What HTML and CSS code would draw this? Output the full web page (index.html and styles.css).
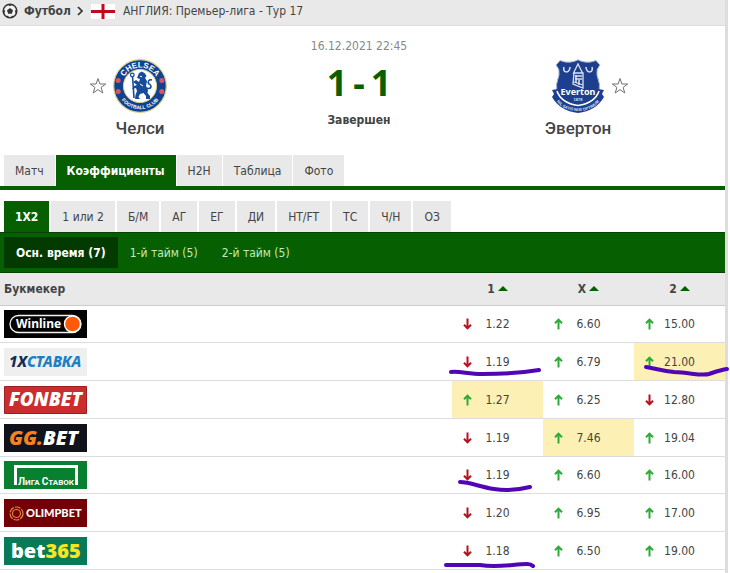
FILE: index.html
```html
<!DOCTYPE html>
<html lang="ru">
<head>
    <meta charset="UTF-8">
    <meta name="viewport" content="width=device-width, initial-scale=1.0">
    <title>Челси - Эвертон</title>
    <link rel="stylesheet" href="styles.css">
</head>
<body>
    <!-- Arrow shapes shared by the odds cells -->
    <svg class="defs" width="0" height="0" aria-hidden="true">
        <symbol id="up" viewBox="0 0 9 12">
            <path d="M4.5 11.5V2M1 5.3L4.5 1.6L8 5.3" fill="none" stroke="#2cac37" stroke-width="2"/>
        </symbol>
        <symbol id="down" viewBox="0 0 9 12">
            <path d="M4.5 .5V10M1 6.7L4.5 10.4L8 6.7" fill="none" stroke="#b5121e" stroke-width="2"/>
        </symbol>
        <symbol id="star" viewBox="0 0 18 18">
            <path d="M9 1.5L10.9 7H16.7L12.1 10.4L13.8 16L9 12.6L4.2 16L5.9 10.4L1.3 7H7.1Z" fill="#fff" stroke="#707070" stroke-width="1"/>
        </symbol>
    </svg>

    <div class="page">
        <nav class="breadcrumb">
            <svg width="16" height="16" viewBox="0 0 16 16" aria-hidden="true">
                <circle cx="8" cy="8" r="6.8" fill="#f4f4f4" stroke="#333" stroke-width="1.5"/>
                <path d="M8 5L11 7.2L9.9 10.7H6.1L5 7.2Z" fill="#333"/>
                <path d="M5.5 1.5L8 3.2L10.5 1.5ZM1.2 6.5L3.2 7.8L2 11ZM14.8 6.5L12.8 7.8L14 11ZM4 13.5L6 12.6L7 14.8ZM12 13.5L10 12.6L9 14.8Z" fill="#333"/>
            </svg>
            <a class="sport" href="#">Футбол</a>
            <svg class="chevron" width="6" height="10" viewBox="0 0 6 10" aria-hidden="true">
                <path d="M1 1L5 5L1 9" fill="none" stroke="#333" stroke-width="1.7"/>
            </svg>
            <svg class="flag" width="24" height="15" viewBox="0 0 24 15" aria-hidden="true">
                <path d="M0 0H24V15H0Z" fill="#fff"/>
                <path d="M12 0V15M0 7.5H24" stroke="#c00a1e" stroke-width="3"/>
            </svg>
            <a class="league" href="#">АНГЛИЯ: Премьер-лига - Тур 17</a>
        </nav>

        <header class="match">
            <div class="team">
                <div class="emblem">
                    <button class="fav fav-left" aria-label="Челси"><svg width="18" height="18"><use href="#star"/></svg></button>
                    <svg class="crest" width="54" height="54" viewBox="0 0 54 54" aria-hidden="true">
                        <defs>
                            <path id="arcTop" d="M8.6 27A18.4 18.4 0 0 1 45.4 27"/>
                            <path id="arcBottom" d="M3.8 27A23.2 23.2 0 0 0 50.2 27"/>
                        </defs>
                        <circle cx="27" cy="27" r="26.3" fill="#0f4390" stroke="#d9cd8a" stroke-width="1.2"/>
                        <circle cx="27" cy="27" r="16.6" fill="#fff" stroke="#d9cd8a" stroke-width="1"/>
                        <text class="ring ring-top"><textPath href="#arcTop" startOffset="50%">CHELSEA</textPath></text>
                        <text class="ring ring-bottom"><textPath href="#arcBottom" startOffset="50%">FOOTBALL CLUB</textPath></text>
                        <g fill="#dd5362">
                            <circle cx="5.2" cy="21.5" r="2.5"/><circle cx="5.2" cy="32.5" r="2.5"/>
                            <circle cx="48.8" cy="21.5" r="2.5"/><circle cx="48.8" cy="32.5" r="2.5"/>
                        </g>
                        <path d="M26 14L29 12.5L32 14.5L33.5 17L32 19L34 22L33 27L35 31L34.5 34L37 37V40H33V37L30.5 34L27 35L25.5 38L27 40H22L22.5 36L24 32L23 29L19 30L21 27L24 26L20 23L23 21L26 23L27 20L24 19Z" fill="#174c9b"/>
                        <path d="M19.5 17L21 39M33 29C39 31 39 26 36 25C34 23 36 20 39 21" fill="none" stroke="#174c9b" stroke-width="1.6"/>
                        <circle cx="19.3" cy="16" r="1.8" fill="#fff" stroke="#174c9b" stroke-width="1.3"/>
                        <path d="M27 17L29 18M27 25L30 27" stroke="#fff" stroke-width="1"/>
                    </svg>
                </div>
                <a class="team-name" href="#">Челси</a>
            </div>

            <div class="result">
                <time class="date" datetime="2021-12-16T22:45">16.12.2021 22:45</time>
                <div class="score"><span>1</span><span>-</span><span>1</span></div>
                <div class="status">Завершен</div>
            </div>

            <div class="team">
                <div class="emblem">
                    <svg class="crest" width="54" height="54" viewBox="0 0 54 54" aria-hidden="true">
                        <defs>
                            <path id="motto" d="M4 40C13 56 41 56 50 40"/>
                        </defs>
                        <path d="M9 1.5Q15 4 20 3Q24 2.5 27 .8Q30 2.5 34 3Q39 4 45 1.5L49 6Q45 10 46 16Q50 26 48 34Q44 44 27 50Q10 44 6 34Q4 26 8 16Q9 10 5 6Z" fill="#1d3f8e" stroke="#a9b9d9" stroke-width="1"/>
                        <path d="M1 31L7 30Q8 42 27 46Q46 42 47 30L53 31L51 35L53 38Q45 52 27 54Q9 52 1 38L3 35Z" fill="#1d3f8e"/>
                        <path d="M6 32Q10 44 27 46.5Q44 44 48 32" fill="none" stroke="#fff" stroke-width="1.6"/>
                        <path d="M13 8C11 14 19 15 19 8M35 8C35 15 43 14 41 8" fill="none" stroke="#dce4f2" stroke-width="1.5"/>
                        <path d="M27 5L31.5 14H22.5ZM23 14H32V29L22 25ZM24 17H31M24 20H31M23 23L32 26" fill="#1d3f8e" stroke="#dce4f2" stroke-width="1.3"/>
                        <path d="M25 16V24M28 21V26" stroke="#dce4f2" stroke-width="1.5"/>
                        <text class="everton" x="27" y="36">Everton</text>
                        <text class="founded" x="27" y="42">1878</text>
                        <text class="motto"><textPath href="#motto" startOffset="50%">NIL SATIS NISI OPTIMUM</textPath></text>
                    </svg>
                    <button class="fav fav-right" aria-label="Эвертон"><svg width="18" height="18"><use href="#star"/></svg></button>
                </div>
                <a class="team-name" href="#">Эвертон</a>
            </div>
        </header>

        <nav class="tabs">
            <a href="#">Матч</a>
            <a class="active" href="#">Коэффициенты</a>
            <a href="#">H2H</a>
            <a href="#">Таблица</a>
            <a href="#">Фото</a>
        </nav>

        <nav class="tabs markets">
            <a class="active" href="#">1X2</a>
            <a href="#">1 или 2</a>
            <a href="#">Б/М</a>
            <a href="#">АГ</a>
            <a href="#">ЕГ</a>
            <a href="#">ДИ</a>
            <a href="#">HT/FT</a>
            <a href="#">ТС</a>
            <a href="#">Ч/Н</a>
            <a href="#">ОЗ</a>
        </nav>

        <nav class="periods">
            <a class="active" href="#">Осн. время (7)</a>
            <a href="#">1-й тайм (5)</a>
            <a href="#">2-й тайм (5)</a>
        </nav>

        <table class="odds">
            <thead>
                <tr>
                    <th class="bookmaker">Букмекер</th>
                    <th><button class="sort">1<i></i></button></th>
                    <th><button class="sort">X<i></i></button></th>
                    <th><button class="sort">2<i></i></button></th>
                </tr>
            </thead>
            <tbody>
                <tr>
                    <td>
                        <a class="logo" href="#">
                            <svg width="83" height="28" viewBox="0 0 83 28">
                                <path d="M0 0H83V28H0Z" fill="#030303"/>
                                <rect x="6" y="5.5" width="71" height="17" rx="8.5" fill="#030303" stroke="#f2f2f2" stroke-width="1.3"/>
                                <circle cx="68.5" cy="14" r="8" fill="#ff5a0a" stroke="#fff" stroke-width="1.4"/>
                                <text class="winline" x="12" y="18">Winline</text>
                            </svg>
                        </a>
                    </td>
                    <td><div class="odd"><svg><use href="#down"/></svg><span>1.22</span></div></td>
                    <td><div class="odd"><svg><use href="#up"/></svg><span>6.60</span></div></td>
                    <td><div class="odd"><svg><use href="#up"/></svg><span>15.00</span></div></td>
                </tr>
                <tr>
                    <td>
                        <a class="logo" href="#">
                            <svg width="83" height="28" viewBox="0 0 83 28">
                                <path d="M0 0H83V28H0Z" fill="#efefef"/>
                                <text class="xstavka" x="5" y="19"><tspan fill="#152b50">1X</tspan><tspan fill="#1b7fc3">СТАВКА</tspan></text>
                            </svg>
                        </a>
                    </td>
                    <td>
                        <div class="odd"><svg><use href="#down"/></svg><span>1.19</span></div>
                        <svg class="mark"><path d="M-1 29C8 28 16 31 30 31C52 31 69 30 87 27"/></svg>
                    </td>
                    <td><div class="odd"><svg><use href="#up"/></svg><span>6.79</span></div></td>
                    <td class="best">
                        <div class="odd"><svg><use href="#up"/></svg><span>21.00</span></div>
                        <svg class="mark"><path d="M12 24C24 26 28 28 40 29C58 30 68 33 75 31C81 29 86 27 93 26"/></svg>
                    </td>
                </tr>
                <tr>
                    <td>
                        <a class="logo" href="#">
                            <svg width="83" height="28" viewBox="0 0 83 28">
                                <path d="M.5 .5H82.5V27.5H.5Z" fill="#c92d2e" stroke="#9c2022"/>
                                <text class="fonbet" x="5" y="20">FONBET</text>
                            </svg>
                        </a>
                    </td>
                    <td class="best"><div class="odd"><svg><use href="#up"/></svg><span>1.27</span></div></td>
                    <td><div class="odd"><svg><use href="#up"/></svg><span>6.25</span></div></td>
                    <td><div class="odd"><svg><use href="#down"/></svg><span>12.80</span></div></td>
                </tr>
                <tr>
                    <td>
                        <a class="logo" href="#">
                            <svg width="83" height="28" viewBox="0 0 83 28">
                                <path d="M0 0H83V28H0Z" fill="#10121c"/>
                                <text class="ggbet" x="5" y="21"><tspan fill="#f58220">GG.</tspan><tspan fill="#fff">BET</tspan></text>
                            </svg>
                        </a>
                    </td>
                    <td><div class="odd"><svg><use href="#down"/></svg><span>1.19</span></div></td>
                    <td class="best"><div class="odd"><svg><use href="#up"/></svg><span>7.46</span></div></td>
                    <td><div class="odd"><svg><use href="#up"/></svg><span>19.04</span></div></td>
                </tr>
                <tr>
                    <td>
                        <a class="logo" href="#">
                            <svg width="83" height="28" viewBox="0 0 83 28">
                                <path d="M0 0H83V28H0Z" fill="#08802f"/>
                                <path d="M11.5 24V5.5H72.5V24" fill="none" stroke="#fff" stroke-width="3"/>
                                <text class="liga" x="42" y="24"><tspan class="cap">Л</tspan>ИГА <tspan class="cap">С</tspan>ТАВОК</text>
                            </svg>
                        </a>
                    </td>
                    <td>
                        <div class="odd"><svg><use href="#down"/></svg><span>1.19</span></div>
                        <svg class="mark"><path d="M8 25C18 25 28 30 42 32C55 34 66 33 78 30"/></svg>
                    </td>
                    <td><div class="odd"><svg><use href="#up"/></svg><span>6.60</span></div></td>
                    <td><div class="odd"><svg><use href="#up"/></svg><span>16.00</span></div></td>
                </tr>
                <tr>
                    <td>
                        <a class="logo" href="#">
                            <svg width="83" height="28" viewBox="0 0 83 28">
                                <path d="M0 0H83V28H0Z" fill="#730006"/>
                                <circle cx="12.5" cy="14.5" r="6.5" fill="none" stroke="#d98a3c" stroke-width="1.2" stroke-dasharray="6 1"/>
                                <circle cx="12.5" cy="14.5" r="4" fill="none" stroke="#d98a3c" stroke-width="1.2"/>
                                <text class="olimpbet" x="22" y="18">OLIMPBET</text>
                            </svg>
                        </a>
                    </td>
                    <td><div class="odd"><svg><use href="#down"/></svg><span>1.20</span></div></td>
                    <td><div class="odd"><svg><use href="#up"/></svg><span>6.95</span></div></td>
                    <td><div class="odd"><svg><use href="#up"/></svg><span>17.00</span></div></td>
                </tr>
                <tr>
                    <td>
                        <a class="logo" href="#">
                            <svg width="83" height="28" viewBox="0 0 83 28">
                                <path d="M0 0H83V28H0Z" fill="#087a58"/>
                                <text class="bet365" x="7" y="21"><tspan fill="#fff">bet</tspan><tspan fill="#f9e51e">365</tspan></text>
                            </svg>
                        </a>
                    </td>
                    <td>
                        <div class="odd"><svg><use href="#down"/></svg><span>1.18</span></div>
                        <svg class="mark"><path d="M-6 33H28C46 36 62 32 75 32C79 32 80 33 81 34"/></svg>
                    </td>
                    <td><div class="odd"><svg><use href="#up"/></svg><span>6.50</span></div></td>
                    <td><div class="odd"><svg><use href="#up"/></svg><span>19.00</span></div></td>
                </tr>
            </tbody>
        </table>
    </div>
</body>
</html>
```
FILE: styles.css
```css
* {
    box-sizing: border-box;
}

body {
    margin: 0;
    background: #fff;
    color: #444;
    font-family: Tahoma, "DejaVu Sans Condensed", "Noto Sans", sans-serif;
    font-size: 12px;
    line-height: 16px;
    overflow: hidden;
}

a {
    color: inherit;
    text-decoration: none;
}

button {
    padding: 0;
    border: none;
    background: none;
    color: inherit;
    font: inherit;
    cursor: pointer;
}

svg {
    display: block;
}

.defs {
    position: absolute;
}

.page {
    margin-right: 2px;
    border-right: 3px solid #ddd;
    min-height: 100vh;
}

/* Breadcrumb */
.breadcrumb {
    display: flex;
    align-items: center;
    height: 26px;
    padding: 0 2px 3px;
    background: #e9e9e9;
    border-bottom: 1px solid #ddd;
}

.sport {
    margin: 0 6px;
    font-weight: bold;
}

.flag {
    margin: 0 8px;
}

/* Match header */
.match {
    display: grid;
    grid-template-columns: 280fr 158fr 280fr;
    padding: 12px 7px 16px 0;
    text-align: center;
}

.team {
    padding-top: 21px;
}

.emblem {
    display: grid;
    grid-template-columns: 1fr auto 1fr;
    align-items: center;
    column-gap: 6px;
}

.crest {
    grid-column: 2;
}

.fav-left {
    justify-self: end;
}

.fav-right {
    justify-self: start;
}

.team-name {
    display: block;
    margin-top: 4px;
    font-family: Roboto, "Liberation Sans", sans-serif;
    font-size: 17px;
    font-weight: 500;
    line-height: 22px;
}

.date {
    display: block;
    color: #888;
}

.score {
    display: flex;
    justify-content: center;
    gap: 6px;
    color: #065f00;
    font-family: "Noto Sans", sans-serif;
    font-size: 36px;
    font-weight: bold;
    line-height: 58px;
}

.status {
    font-weight: bold;
}

/* Crest lettering */
.ring {
    fill: #fff;
    font-family: "Liberation Sans", Arial, sans-serif;
    font-weight: bold;
    text-anchor: middle;
}

.ring-top {
    font-size: 8px;
}

.ring-bottom {
    font-size: 5px;
}

.everton {
    fill: #fff;
    font-family: "Noto Sans", sans-serif;
    font-size: 9px;
    font-weight: bold;
    text-anchor: middle;
}

.founded,
.motto {
    fill: #dce4f2;
    font-family: "Liberation Sans", Arial, sans-serif;
    font-size: 4px;
    font-weight: bold;
    text-anchor: middle;
}

/* Tabs */
.tabs {
    display: flex;
    gap: 1px;
    padding-left: 4px;
    border-bottom: 4px solid #065f00;
}

.tabs a {
    padding: 8px 11px 7px;
    background: #e9e9e9;
}

.tabs .active {
    background: #065f00;
    color: #fff;
    font-weight: bold;
}

.markets {
    gap: 2px;
    margin-top: 11px;
    border-bottom: 1px solid #044400;
}

.periods {
    display: flex;
    padding: 4px;
    background: #065f00;
    border-bottom: 1px solid #044400;
    color: #c5e8b8;
}

.periods a {
    padding: 8px 12px 7px;
}

.periods .active {
    background: #033a00;
    color: #fff;
    font-weight: bold;
}

/* Odds table */
.odds {
    width: 100%;
    border-collapse: separate;
    border-spacing: 0;
    table-layout: fixed;
}

.odds th {
    width: 91px;
    height: 33px;
    padding: 0;
    background: #e9e9e9;
    border-bottom: 1px solid #ccc;
}

.odds .bookmaker {
    width: auto;
    padding-left: 4px;
    text-align: left;
}

.sort i {
    display: inline-block;
    margin-left: 3px;
    border: 5px solid transparent;
    border-top: none;
    border-bottom-color: #065f00;
    vertical-align: 2px;
}

.odds td {
    position: relative;
    height: 38px;
    padding: 0;
    border-bottom: 1px solid #ddd;
}

.odds tr:nth-child(4n+1) td {
    height: 37px;
}

.odds .best {
    background: #fcf0b5;
}

.logo {
    display: block;
    width: 83px;
    margin-left: 4px;
}

.odd {
    display: grid;
    grid-template-columns: 9px 1fr 9px;
    align-items: center;
    padding: 0 11px;
    text-align: center;
}

.odd svg {
    width: 9px;
    height: 12px;
}

/* Pen strokes drawn over the odds */
.mark {
    position: absolute;
    z-index: 1;
    top: 0;
    left: 0;
    width: 100%;
    height: 100%;
    overflow: visible;
    fill: none;
    stroke: #5006b6;
    stroke-width: 4;
    stroke-linecap: round;
    pointer-events: none;
}

/* Bookmaker logos */
.winline {
    fill: #fff;
    font-family: "Noto Sans", sans-serif;
    font-size: 12px;
    font-weight: bold;
}

.xstavka {
    font-family: "Noto Sans", sans-serif;
    font-size: 15px;
    font-style: italic;
    font-weight: 800;
}

.fonbet {
    fill: #fff;
    font-family: "Open Sans", sans-serif;
    font-size: 19px;
    font-style: italic;
    font-weight: 800;
}

.ggbet {
    font-family: "Open Sans", sans-serif;
    font-size: 20px;
    font-style: italic;
    font-weight: 800;
}

.liga {
    fill: #fff;
    font-family: Roboto, sans-serif;
    font-size: 8px;
    font-weight: bold;
    text-anchor: middle;
}

.liga .cap {
    font-size: 10px;
}

.olimpbet {
    fill: #fff;
    font-family: Lato, sans-serif;
    font-size: 11px;
    font-weight: 900;
}

.bet365 {
    font-family: "Open Sans", sans-serif;
    font-size: 20px;
    font-weight: 800;
}
```
